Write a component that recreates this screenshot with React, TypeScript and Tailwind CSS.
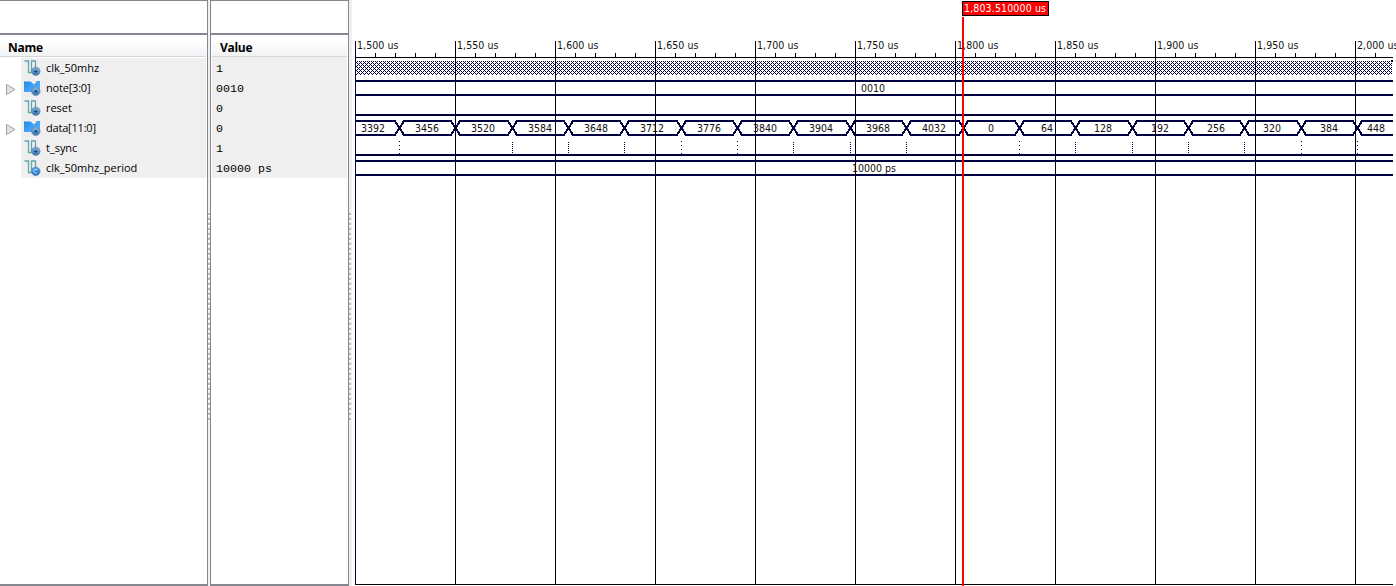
import React from "react";

const INK = "#000040";
const X0 = 355;
const edges = [399, 455, 512, 568, 624, 681, 737, 793, 850, 906, 963, 1019, 1075, 1132, 1188, 1244, 1301, 1357];
const values = ["3392", "3456", "3520", "3584", "3648", "3712", "3776", "3840", "3904", "3968", "4032", "0", "64", "128", "192", "256", "320", "384", "448"];
const sparse = [399, 681, 737, 1019, 1301, 1357];

const signals = [
  { name: "clk_50mhz", value: "1", kind: "bit" },
  { name: "note[3:0]", value: "0010", kind: "bus" },
  { name: "reset", value: "0", kind: "bit" },
  { name: "data[11:0]", value: "0", kind: "bus" },
  { name: "t_sync", value: "1", kind: "bit" },
  { name: "clk_50mhz_period", value: "10000 ps", kind: "const" },
];

function SignalIcon({ kind }: { kind: string }) {
  return (
    <svg width="17" height="18" viewBox="0 0 17 18" className="shrink-0">
      <defs>
        <linearGradient id="busFill" x1="0" y1="0" x2="1" y2="1">
          <stop offset="0" stopColor="#2288e6" />
          <stop offset="1" stopColor="#5db8ff" />
        </linearGradient>
        <linearGradient id="badgeFill" x1="0" y1="0" x2="0" y2="1">
          <stop offset="0" stopColor="#86b4dc" />
          <stop offset="1" stopColor="#3c74b0" />
        </linearGradient>
        <linearGradient id="constFill" x1="0" y1="0" x2="0" y2="1">
          <stop offset="0" stopColor="#5aa9ea" />
          <stop offset="1" stopColor="#1560b8" />
        </linearGradient>
      </defs>
      {kind === "bus" ? (
        <path d="M0 2.500h6.500L10 5.500 13 2h3v11h-3l-3-2-3 2H0z" fill="url(#busFill)" />
      ) : (
        <path d="M.5 2H4.500V13.500H7.500V2H11.500V10" fill="none" stroke="#62a5ad" strokeWidth="1.300" />
      )}
      <circle cx="11.800" cy="12.300" r="4.300" fill={kind === "const" ? "url(#constFill)" : "url(#badgeFill)"} stroke="#5b86b2" strokeWidth=".6" />
      {kind === "const" ? (
        <path d="M13.300 11a2 2 0 1 0 0 2.600" fill="none" stroke="#d5eafc" strokeWidth=".9" />
      ) : (
        <path d="M10.200 12.500h3.200M11.800 10.900v3.200" stroke="#1c4677" strokeWidth="1" />
      )}
    </svg>
  );
}

function Label({ x, y, w, children, fill = "#111" }: { x: number; y: number; w: number; children: string; fill?: string }) {
  return (
    <text x={x} y={y} textLength={w} fill={fill}>
      {children}
    </text>
  );
}

function Waveform() {
  const ticks = Array.from({ length: 52 }, (_, i) => i * 20).filter((t) => t % 100 !== 0);
  return (
    <svg width="1045" height="586" viewBox="351 0 1045 586" className="block shrink-0" shapeRendering="crispEdges" fontFamily="'DejaVu Sans Condensed', 'DejaVu Sans', sans-serif" fontSize="10.500">
      <defs>
        <pattern id="clock" x="356" y="61" width="4" height="4" patternUnits="userSpaceOnUse">
          <path d="M1 0h1v1h-1zM3 0h1v1h-1zM0 1h1v1h-1zM1 2h1v1h-1zM3 2h1v1h-1zM2 3h1v1h-1z" fill={INK} />
        </pattern>
      </defs>
      <rect x={X0} y="57" width="1038" height="1" fill="#000" />
      {ticks.map((t) => (
        <rect key={t} x={X0 + t} y="53" width="1" height="4" fill="#000" />
      ))}
      <rect x={X0} y="61" width="1037" height="14" fill="url(#clock)" />
      <rect x="1391" y="60" width="2" height="2" fill={INK} />
      {[80, 94, 114, 154, 160, 174].map((y) => (
        <rect key={y} x={X0} y={y} width="1038" height="2" fill={INK} />
      ))}
      {values.map((v, i) => {
        const first = i === 0;
        const last = i === values.length - 1;
        const a = first ? X0 : edges[i - 1] + 0.5;
        const b = last ? 1393 : edges[i] + 0.5;
        const left = first ? a : a + 4.5;
        const right = last ? b : b - 4.5;
        return (
          <path
            key={v}
            d={[121, 135].map((y) => `M${a} ${first ? y : 128}L${left} ${y}H${right}L${b} ${last ? y : 128}`).join("")}
            fill="none"
            stroke={INK}
            strokeWidth="2"
          />
        );
      })}
      {edges.filter((x) => x !== 455 && x !== 963).map((x) => (
        <path key={x} d={`M${x + 0.5} ${sparse.includes(x) ? 141 : 142}V154`} stroke={INK} strokeDasharray={sparse.includes(x) ? "1 3" : "1 1"} />
      ))}
      {Array.from({ length: 11 }, (_, i) => (
        <rect key={i} x={X0 + i * 100} y="41" width="1" height="544" fill={i ? "#000018" : INK} />
      ))}
      <rect x={X0} y="584" width="1038" height="1" fill="#000" />
      {Array.from({ length: 11 }, (_, i) => (
        <Label key={i} x={357 + i * 100} y={49} w={41.5}>
          {`${(1500 + i * 50).toLocaleString("en-US")} us`}
        </Label>
      ))}
      {values.map((v, i) => {
        const a = i ? edges[i - 1] : 347;
        const b = i === 18 ? 1395 : edges[i];
        const w = v.length * 6;
        return <Label key={v} x={Math.floor((a + b - w) / 2)} y={132} w={w}>{v}</Label>;
      })}
      <Label x={861} y={92} w={24}>0010</Label>
      <Label x={852} y={172} w={44}>10000 ps</Label>
      <rect x="962" y="17" width="2" height="569" fill="#f00" />
      <rect x="962.500" y="1.500" width="86" height="14" fill="#f00" stroke="#000" />
      <Label x={964} y={12} w={82} fill="#fff">1,803.510000 us</Label>
    </svg>
  );
}

function Header({ children, className }: { children: string; className: string }) {
  return (
    <div className={`mt-[6px] flex h-[16px] items-center border-b border-[#d5d5d5] bg-linear-to-b from-white to-[#f1f2f4] pb-[2px] text-[12px] font-bold text-black ${className}`}>
      {children}
    </div>
  );
}

function Splitter({ className }: { className: string }) {
  return (
    <div className={`flex shrink-0 flex-col bg-[#f0f0f0] pt-[213px] ${className}`}>
      <div className="h-[208px] w-[2px] bg-[repeating-linear-gradient(180deg,#b8b8b8_0_2px,#fff_2px_3px,#f0f0f0_3px_5px)]" />
    </div>
  );
}

export default function App() {
  return (
    <div className="flex h-[586px] w-[1396px] overflow-hidden bg-white font-['Open_Sans','Noto_Sans',sans-serif]">
      <section className="flex w-[208px] shrink-0 flex-col border-t border-r border-b-2 border-[#828790]">
        <div className="h-[34px] shrink-0 border-b-2 border-[#828790]" />
        <Header className="mr-[1px] pl-[8px] tracking-[-0.3px]">Name</Header>
        <div className="pt-px">
          {signals.map((s) => (
            <div key={s.name} className="flex h-[20px]">
              <div className="flex w-[21px] items-center pt-[3px] pl-[6px]">
                {s.kind === "bus" && (
                  <svg width="10" height="11" viewBox="0 0 10 11">
                    <path d="M.5.500v10L9 5.500z" fill="#e2e2e2" stroke="#a0a0a0" />
                  </svg>
                )}
              </div>
              <div className="mr-[1px] flex flex-1 items-center bg-[#efefef] pl-[3px] text-[11px] text-black">
                <SignalIcon kind={s.kind} />
                <span className={s.kind === "bus" ? "pl-[5px] tracking-[-0.2px]" : "pl-[5px] tracking-[-0.03px]"}>{s.name}</span>
              </div>
            </div>
          ))}
        </div>
      </section>
      <Splitter className="w-[2px]" />
      <section className="flex w-[139px] shrink-0 flex-col border-x border-t border-b-2 border-[#828790]">
        <div className="h-[34px] shrink-0 border-b-2 border-[#828790]" />
        <Header className="mr-[1px] ml-[1px] pl-[8px] tracking-[-0.3px]">Value</Header>
        <div className="mr-[1px] ml-[1px] bg-[#efefef] pt-px font-['Liberation_Mono',monospace] text-[11.67px] text-black">
          {signals.map((s) => (
            <div key={s.name} className="flex h-[20px] items-center pt-[3px] pl-[4px] whitespace-pre">{s.value}</div>
          ))}
        </div>
      </section>
      <Splitter className="-mr-px w-[3px]" />
      <Waveform />
    </div>
  );
}
